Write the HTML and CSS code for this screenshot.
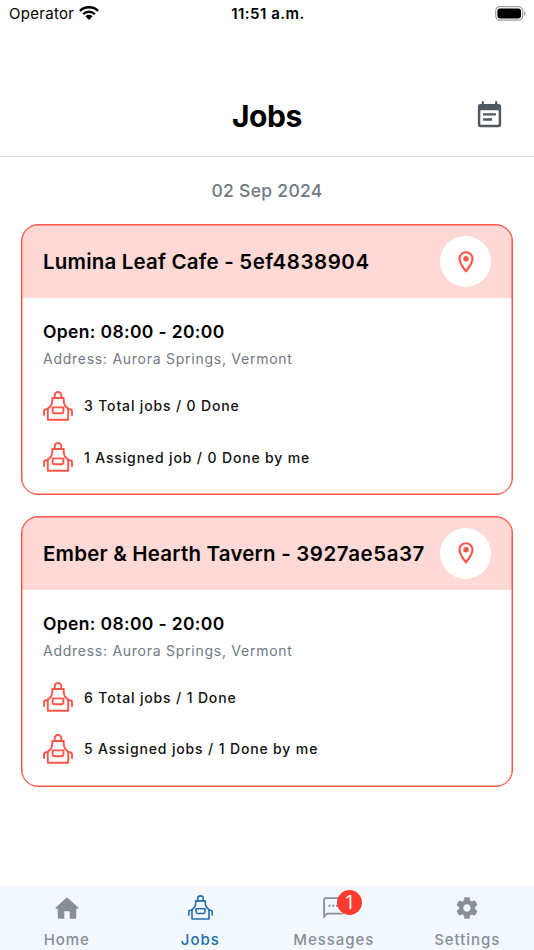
FILE: index.html
```html
<!DOCTYPE html>
<html lang="en">
<head>
<meta charset="utf-8">
<title>Jobs</title>
<link rel="stylesheet" href="styles.css">
</head>
<body>
<svg class="sprite" aria-hidden="true">
  <symbol id="apron" viewBox="0 0 30 30">
    <g fill="none" stroke="currentColor" stroke-width="1.900" stroke-linejoin="round" stroke-linecap="round">
      <path d="M11.700 7V4.300a3.300 3.300 0 0 1 6.600 0V7"/>
      <path d="M9.300 7h11.400v2.400c0 3.400 1.600 6.200 4.500 8.100v11.300H4.800V17.500c2.900-1.900 4.500-4.700 4.500-8.100z"/>
      <path d="M9.600 16.400h10.800v3.800a2 2 0 0 1-2 2h-6.800a2 2 0 0 1-2-2z"/>
      <path d="M4.800 18.200H3.200c-1.300 0-2.200.8-2.200 2v3.900M25.200 18.200h1.600c1.300 0 2.200.8 2.200 2v3.900"/>
    </g>
  </symbol>
  <symbol id="pin" viewBox="0 0 24 24">
    <path fill="currentColor" d="M12 2C8.130 2 5 5.130 5 9c0 5.250 7 13 7 13s7-7.750 7-13c0-3.870-3.130-7-7-7zM7 9c0-2.760 2.240-5 5-5s5 2.240 5 5c0 2.880-2.880 7.190-5 9.880C9.920 16.210 7 11.850 7 9z"/>
    <circle cx="12" cy="9" r="2.500" fill="currentColor"/>
  </symbol>
</svg>

<header class="status">
  <div class="carrier"><span>Operator</span>
    <svg class="wifi" viewBox="0 0 20 14"><path d="M1 4.900a12.900 12.900 0 0 1 18 0M4.200 8.100a8.300 8.300 0 0 1 11.600 0" fill="none" stroke="#000" stroke-width="2.500"/><path d="M6.400 10.300a5.200 5.200 0 0 1 7.200 0L10 13.900z"/></svg>
  </div>
  <div class="time">11:51 a.m.</div>
  <div class="power">
    <svg class="battery" viewBox="0 0 32 15"><rect x=".7" y=".7" width="27" height="13.400" rx="4" fill="none" stroke="#a0a0a0" stroke-width="1.200"/><rect x="2.400" y="2.400" width="23.600" height="10" rx="2.400"/><path d="M29.100 5.200c2 .6 2 3.900 0 4.500z" fill="#a0a0a0"/></svg>
  </div>
</header>

<div class="titlebar">
  <h1>Jobs</h1>
  <svg class="calendar" viewBox="0 0 24 24"><path fill="currentColor" fill-rule="evenodd" d="M6 1h1.600v2h8.800V1H18v2h1a2 2 0 0 1 2 2v14a2 2 0 0 1-2 2H5a2 2 0 0 1-2-2V5a2 2 0 0 1 2-2h1zM4.900 8v11.100h14.200V8zM7 10.200h10v1.800H7zM7 14.200h7V16H7z"/></svg>
</div>

<main>
  <p class="date">02 Sep 2024</p>
  <article class="card">
    <div class="card-head"><h2>Lumina Leaf Cafe - <span class="code">5ef4838904</span></h2><span class="place"><svg><use href="#pin"/></svg></span></div>
    <div class="card-body">
      <p class="open">Open: 08:00 - 20:00</p>
      <p class="address">Address: Aurora Springs, Vermont</p>
      <p class="count"><svg><use href="#apron"/></svg><span>3 Total jobs / 0 Done</span></p>
      <p class="count"><svg><use href="#apron"/></svg><span>1 Assigned job / 0 Done by me</span></p>
    </div>
  </article>
  <article class="card">
    <div class="card-head"><h2>Ember &amp; Hearth Tavern - <span class="code">3927ae5a37</span></h2><span class="place"><svg><use href="#pin"/></svg></span></div>
    <div class="card-body">
      <p class="open">Open: 08:00 - 20:00</p>
      <p class="address">Address: Aurora Springs, Vermont</p>
      <p class="count"><svg><use href="#apron"/></svg><span>6 Total jobs / 1 Done</span></p>
      <p class="count"><svg><use href="#apron"/></svg><span>5 Assigned jobs / 1 Done by me</span></p>
    </div>
  </article>
</main>

<nav class="tabs">
  <div class="tab"><span class="icon"><svg viewBox="0 0 26 26"><path fill="currentColor" d="M12.200 2.900a1.200 1.200 0 0 1 1.600 0l10.500 9.700c.5.500.3 1.100-.4 1.100h-1.700v8.700a1.300 1.300 0 0 1-1.300 1.300h-5.200v-7.500h-5.400v7.500H5.100a1.300 1.300 0 0 1-1.300-1.300v-8.700H2.100c-.7 0-.9-.6-.4-1.100z"/></svg></span><span class="label">Home</span></div>
  <div class="tab active"><span class="icon"><svg><use href="#apron"/></svg></span><span class="label">Jobs</span></div>
  <div class="tab"><span class="icon"><svg viewBox="0 0 24 24"><path fill="currentColor" fill-rule="evenodd" d="M20 2H4c-1.100 0-2 .9-2 2v18l4-4h14c1.100 0 2-.9 2-2V4c0-1.100-.9-2-2-2zm.3 14.300H5.300l-1.600 1.600V3.700h16.600zM7 9h1.800v1.800H7zm3.400 0h1.800v1.800h-1.800zm3.400 0h1.800v1.800h-1.800z"/></svg><b class="badge">1</b></span><span class="label">Messages</span></div>
  <div class="tab"><span class="icon"><svg viewBox="0 0 24 24"><path fill="currentColor" stroke="currentColor" stroke-width=".4" d="M19.140 12.940c.04-.3.060-.61.060-.94 0-.32-.02-.64-.07-.94l2.030-1.580c.18-.14.23-.41.120-.61l-1.920-3.320c-.12-.22-.37-.29-.59-.22l-2.390.96c-.5-.38-1.030-.7-1.620-.94l-.36-2.540c-.04-.24-.24-.41-.48-.41h-3.840c-.24 0-.43.17-.47.41l-.36 2.540c-.59.24-1.130.57-1.620.94l-2.390-.96c-.22-.08-.47 0-.59.22L2.740 8.870c-.12.21-.08.47.120.61l2.030 1.580c-.05.3-.09.63-.09.94s.02.640.070.94l-2.030 1.580c-.18.14-.23.41-.12.61l1.920 3.320c.12.22.37.29.59.22l2.390-.96c.5.380 1.030.7 1.620.94l.36 2.540c.05.24.24.410.48.410h3.840c.24 0 .44-.17.47-.41l.36-2.540c.59-.24 1.130-.56 1.620-.94l2.390.96c.22.080.47 0 .59-.22l1.920-3.320c.12-.22.070-.47-.12-.61l-2.010-1.580zM12 15.600c-1.980 0-3.600-1.620-3.600-3.600s1.620-3.600 3.600-3.600 3.600 1.620 3.600 3.600-1.620 3.600-3.600 3.600z"/></svg></span><span class="label">Settings</span></div>
</nav>
</body>
</html>
```

FILE: styles.css
```css
* { box-sizing: border-box; }
body {
  margin: 0;
  height: 950px;
  display: flex;
  flex-direction: column;
  background: #fff;
  color: #000;
  font-family: Inter, "Liberation Sans", sans-serif;
  overflow: hidden;
}
h1, h2, p { margin: 0; white-space: nowrap; }
svg { display: block; flex: none; }
.sprite { position: absolute; width: 0; height: 0; }

.status {
  height: 27px;
  padding: 0 7px 0 9px;
  display: grid;
  grid-template-columns: 1fr auto 1fr;
  align-items: center;
  font-size: 15px;
}
.carrier { display: flex; align-items: center; gap: 5px; letter-spacing: .3px; }
.wifi { width: 20px; height: 14px; margin-top: -2px; }
.time { font-weight: 600; letter-spacing: .5px; }
.power { display: flex; justify-content: flex-end; }
.battery { width: 32px; height: 15px; margin-top: -1px; }

.titlebar {
  height: 130px;
  padding: 49px 29px 0;
  display: grid;
  grid-template-columns: 31px 1fr 31px;
  border-bottom: 1px solid #d5dde4;
}
h1 {
  grid-column: 2;
  text-align: center;
  font-size: 30px;
  line-height: 80px;
  height: 80px;
  font-weight: 700;
  letter-spacing: -.4px;
}
.calendar { width: 31px; height: 31px; margin-top: 24px; color: #515761; }

main {
  flex: 1;
  padding: 21px 21px 0;
  display: flex;
  flex-direction: column;
}
.date {
  text-align: center;
  font-size: 17.500px;
  line-height: 26px;
  font-weight: 500;
  letter-spacing: .3px;
  color: #707a84;
  margin-bottom: 20px;
}
.card {
  height: 271px;
  margin-bottom: 20.500px;
  border: 1px solid #fc5549;
  box-shadow: inset 0 0 0 .5px #fc5549;
  border-radius: 17px;
  overflow: hidden;
}
.card-head {
  height: 73px;
  padding: 0 21px;
  display: flex;
  align-items: center;
  justify-content: space-between;
  background: #ffd9d6;
  box-shadow: inset 0 .5px 0 #fc5549, inset .5px 0 0 #fc5549, inset -.5px 0 0 #fc5549;
  border-radius: 16px 16px 0 0;
}
h2 { font-size: 20.500px; line-height: 26px; font-weight: 600; letter-spacing: .19px; padding-top: 1px; }
.code { letter-spacing: .55px; }
.place {
  width: 51px;
  height: 51px;
  flex: none;
  display: grid;
  place-items: center;
  border-radius: 50%;
  background: #fff;
  color: #fc5549;
}
.place svg { width: 26px; height: 26px; }
.card-body { padding: 22px 21px; }
.open { font-size: 17.500px; line-height: 24px; font-weight: 600; letter-spacing: .35px; }
.address { margin-top: 5px; font-size: 14px; line-height: 20px; letter-spacing: .74px; color: #707a84; }
.count {
  display: flex;
  align-items: center;
  gap: 11px;
  height: 30px;
  margin-top: 21.500px;
  font-size: 14px;
  font-weight: 500;
  letter-spacing: .85px;
  color: #111;
}
.count svg { width: 30px; height: 30px; color: #fc5549; }

.tabs {
  height: 64px;
  display: grid;
  grid-template-columns: repeat(4, 1fr);
  background: #f2f8fd;
}
.tab {
  display: flex;
  flex-direction: column;
  align-items: center;
  padding-top: 9px;
  color: #868e98;
}
.active { color: #226daf; }
.icon { position: relative; }
.icon svg { width: 26px; height: 26px; }
.active svg { width: 25px; height: 25px; margin-bottom: 1px; }
.label { margin-top: 9px; font-size: 15px; line-height: 20px; font-weight: 500; letter-spacing: .95px; }
.badge {
  position: absolute;
  left: 16px;
  top: -5px;
  width: 25px;
  height: 25px;
  border-radius: 50%;
  background: #ff3b30;
  color: #fff;
  font-size: 18px;
  line-height: 25px;
  font-weight: 400;
  text-align: center;
}
```
